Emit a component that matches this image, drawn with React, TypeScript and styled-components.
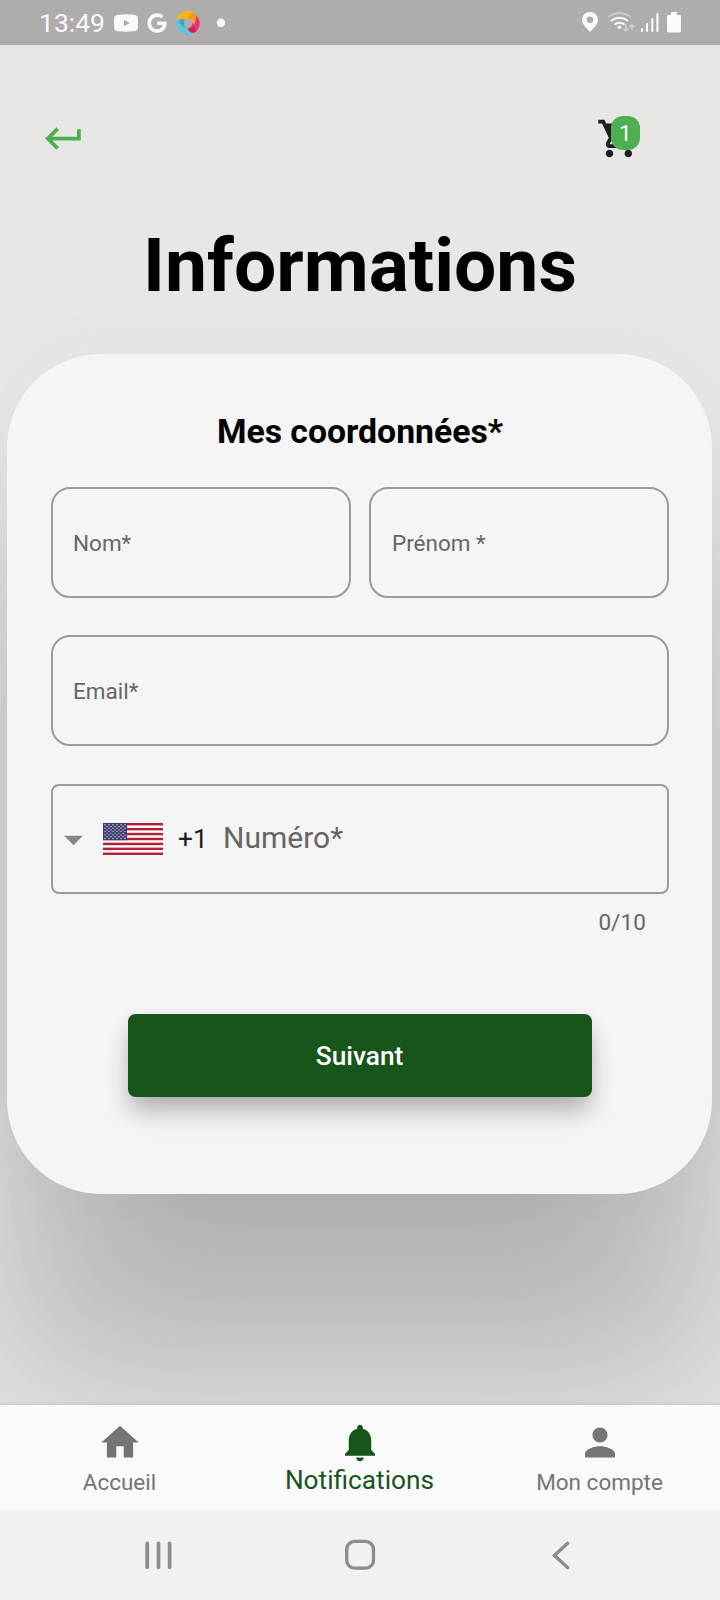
import React from "react";
import styled, { createGlobalStyle } from "styled-components";
import {
  MdArrowDropDown,
  MdHome,
  MdKeyboardReturn,
  MdNotifications,
  MdPerson,
  MdShoppingCart,
} from "react-icons/md";
import { FaGoogle } from "react-icons/fa";

const GlobalStyle = createGlobalStyle`
  *, *::before, *::after { box-sizing: border-box; }
  body { margin: 0; background: #e8e7e5; }
`;

const Screen = styled.div`
  width: 720px;
  height: 1600px;
  display: flex;
  flex-direction: column;
  overflow: hidden;
  background: #e8e7e5;
  font-family: Roboto, "Liberation Sans", sans-serif;
  color: #000;
`;

const StatusBar = styled.header`
  height: 45px;
  flex: none;
  display: flex;
  justify-content: space-between;
  padding: 0 38px 0 39px;
  background: #aeacac;
  color: #fafafa;
`;

const StatusGroup = styled.div`
  display: flex;
  align-items: center;
  svg { display: block; flex: none; }
`;

const Clock = styled.span`
  width: 75px;
  font-size: 26.5px;
  line-height: 45px;
  white-space: nowrap;
`;

const GoogleMark = styled(FaGoogle)`
  margin: 0 9px 0 9px;
`;

const Content = styled.main`
  flex: 1;
  min-height: 0;
  display: flex;
  flex-direction: column;
  overflow: hidden;
`;

const TopBar = styled.div`
  display: flex;
  justify-content: space-between;
  padding: 71px 79px 0 41px;
`;

const IconButton = styled.button<{ $color: string }>`
  position: relative;
  width: 45px;
  height: 45px;
  padding: 0;
  border: 0;
  background: none;
  color: ${(p) => p.$color};
  font-family: inherit;
  svg { display: block; transform: translateX(0.4px); }
`;

const Badge = styled.span`
  position: absolute;
  left: 15px;
  top: 0;
  width: 28.5px;
  height: 34px;
  border-radius: 12px;
  background: #4caf50;
  color: #fff;
  font-size: 22.5px;
  line-height: 34px;
  text-align: center;
`;

const Title = styled.h1`
  margin: 60px 0 0;
  font-size: 75px;
  line-height: 88px;
  font-weight: 700;
  text-align: center;
`;

const Card = styled.section`
  height: 840px;
  flex: none;
  margin: 45px 8px 0 7px;
  padding: 58px 43px 0 44px;
  display: flex;
  flex-direction: column;
  border-radius: 94px;
  background: #f5f5f5;
  box-shadow: 0 183px 140px -75px rgba(20, 14, 20, 0.14),
    0 183px 140px 50px rgba(20, 14, 20, 0.12),
    0 0 80px rgba(20, 14, 20, 0.03);
`;

const CardTitle = styled.h2`
  margin: 0 0 35px;
  font-size: 33.75px;
  line-height: 40px;
  font-weight: 700;
  text-align: center;
`;

const Fields = styled.div`
  display: grid;
  grid-template-columns: 1fr 1fr;
  column-gap: 18px;
  row-gap: 37px;
`;

const Field = styled.label<{ $wide?: boolean; $inset?: number }>`
  grid-column: ${(p) => (p.$wide ? "1 / -1" : "auto")};
  height: 111px;
  display: flex;
  align-items: center;
  padding-left: ${(p) => p.$inset ?? 20}px;
  border: 2px solid #9b9b9b;
  border-radius: 19px;
  color: #666;
  font-size: 22.5px;
  line-height: 26px;
`;

const PhoneField = styled(Field)`
  height: 110px;
  margin-top: 1px;
  border-radius: 8px;
  font-size: 30px;
  line-height: 36px;
`;

const Arrow = styled(MdArrowDropDown)`
  flex: none;
  margin: 1px 7px 0 -2px;
  color: #868686;
`;

const DialCode = styled.span`
  width: 45px;
  margin-left: 15px;
  color: #1f1f1f;
  font-size: 26.25px;
`;

const NumberLabel = styled.span`
  padding-bottom: 2px;
`;

const Counter = styled.div`
  margin: 14px 23px 0 0;
  color: #666;
  font-size: 22.5px;
  line-height: 28px;
  letter-spacing: 0.1px;
  text-align: right;
`;

const Submit = styled.button`
  align-self: center;
  width: 464px;
  height: 83px;
  margin: 78px 1px 0 0;
  border: 0;
  border-radius: 7.5px;
  background: #18551b;
  color: #fff;
  font-family: inherit;
  font-size: 26.25px;
  font-weight: 500;
  box-shadow: 0 18px 26px -3px rgba(0, 0, 0, 0.24),
    0 6px 20px rgba(0, 0, 0, 0.08);
`;

const TabBar = styled.nav`
  position: relative;
  height: 105px;
  flex: none;
  display: grid;
  grid-template-columns: repeat(3, 1fr);
  background: #fafafa;
  box-shadow: 0 0 4px rgba(0, 0, 0, 0.16);
`;

const Tab = styled.a<{ $active?: boolean }>`
  display: flex;
  flex-direction: column;
  align-items: center;
  padding: 15px 1px 0 0;
  color: ${(p) => (p.$active ? "#18551b" : "#757575")};
  font-size: ${(p) => (p.$active ? "26.25px" : "22.5px")};
  line-height: ${(p) => (p.$active ? "31px" : "35px")};
  svg { display: block; flex: none; transform: translateX(0.5px); }
`;

const SystemBar = styled.footer`
  position: relative;
  height: 90px;
  flex: none;
  display: flex;
  justify-content: space-between;
  align-items: center;
  padding: 0 146px 0 143px;
  background: #f1f1f1;
  svg { display: block; }
`;

const VideoIcon = () => (
  <svg width="24" height="18" viewBox="0 0 24 18">
    <path
      fillRule="evenodd"
      fill="#fafafa"
      d="M4 .7Q12-.2 20 .7 24 1 24 5V13Q24 17 20 17.3 12 18 4 17.3 0 17 0 13V5Q0 1 4 .7ZM10 5.8V12.2L16 9Z"
    />
  </svg>
);

const SwirlIcon = () => (
  <svg width="24" height="24" viewBox="0 0 24 24">
    <path fill="#fbb512" d="M.8 9.4C1.500 3.500 6 0 12 0 16 0 19 2.500 20 6.200L19 12.500C17.500 9 14.500 7.300 11 7.800L8 8.400C5 7.500 3 8 .8 9.400Z" />
    <path fill="#f99a0d" d="M11 7.600C12.500 4 15 2 17.500 1.700 19 3 20 4.500 20 6.200L19 12.500C17.500 9.300 14.800 7.400 11 7.600Z" />
    <path fill="#f2336f" d="M20.200 4.200C24.500 8.800 25 15 21 19.500 18 22.800 13.500 23 10.500 17.500 14 17.500 16 15.500 16.300 12.600L18.600 13C19.600 10 20.200 7.500 20.200 4.200Z" />
    <path fill="#d41f50" d="M10.500 17.500C14.200 18 17 16.500 18.500 14 18 17 18.800 19.500 20.500 20 17 23.500 12 22.500 10.500 17.500Z" />
    <path fill="#62c3df" d="M8 8C7.500 12 8.500 15.500 11.500 17 12.500 20 15.500 22.300 18 21.700 13 25 6 24.500 2.500 19-.5 14.500-.5 9 4 8.200 5.500 7.900 6.800 7.900 8 8Z" />
    <path fill="#42a6c8" d="M9 8C7.200 11 8 14.500 10 16.500 6 16 3.500 13.500 3 9.500 4.500 8.200 6.500 7.800 9 8Z" />
  </svg>
);

const DotIcon = () => (
  <svg width="41" height="24" viewBox="0 0 41 24">
    <circle cx="21" cy="11.800" r="4.200" fill="#fafafa" />
  </svg>
);

const SignalIcons = () => (
  <svg width="100" height="45" viewBox="582 0 100 45">
    <path
      fillRule="evenodd"
      fill="#fafafa"
      d="M590 12C585.500 12 582 15.500 582 20 582 24.500 587 28.500 590 32 593 28.500 598 24.500 598 20 598 15.500 594.500 12 590 12ZM590 16.500A3.300 3.300 0 1 1 590 23.100 3.300 3.300 0 1 1 590 16.500Z"
    />
    <g fill="none" stroke="#fafafa" strokeWidth="2.100">
      <path d="M608.500 17Q619.500 9 630.500 17" strokeOpacity=".42" />
      <path d="M611 21Q619.500 14.500 628 21" />
      <path d="M614.500 24.500Q619.500 21 624.500 24.500" />
    </g>
    <circle cx="619.500" cy="27.300" r="1.700" fill="#fafafa" />
    <path
      d="M626 24V31M623.500 28.500L626 31 628.500 28.500M632 30V24.500M629.500 27L632 24.500 634.500 27"
      fill="none"
      stroke="#fafafa"
      strokeOpacity=".45"
      strokeWidth="1.500"
    />
    <path
      d="M642 29V31M647 24.200V31M652.300 19V31M657.400 14.200V31"
      stroke="#fafafa"
      strokeWidth="2.200"
      strokeLinecap="round"
    />
    <path
      fill="#fafafa"
      d="M671.500 12H676.500Q677 12 677 12.500V15H680Q681 15 681 16V31Q681 32.500 679.500 32.500H668.500Q667 32.500 667 31V16Q667 15 668 15H671V12.500Q671 12 671.500 12Z"
    />
  </svg>
);

const stripeHeight = 32 / 13;

const UsFlag = () => (
  <svg width="60" height="32" viewBox="0 0 60 32">
    <rect width="60" height="32" fill="#fff" />
    {[0, 2, 4, 6, 8, 10, 12].map((n) => (
      <rect key={n} y={n * stripeHeight} width="60" height={stripeHeight} fill="#b22234" />
    ))}
    <rect width="24" height="17.200" fill="#3c3b6e" />
    {Array.from({ length: 9 }, (_, row) =>
      Array.from({ length: row % 2 ? 5 : 6 }, (_, col) => (
        <circle
          key={`${row}-${col}`}
          cx={2 + col * 4 + (row % 2 ? 2 : 0)}
          cy={1.7 + row * 1.73}
          r=".72"
          fill="#dcdce8"
        />
      ))
    )}
  </svg>
);

const RecentsIcon = () => (
  <svg width="31" height="30" viewBox="0 0 31 30">
    <path d="M4.200 3.300V27.200M15.500 3.300V27.200M26.600 3.300V27.200" stroke="#8c8c8c" strokeWidth="3.700" strokeLinecap="round" />
  </svg>
);

const HomeKeyIcon = () => (
  <svg width="32" height="32" viewBox="0 0 32 32">
    <rect x="1.700" y="2.400" width="26.800" height="26.800" rx="8" fill="none" stroke="#8c8c8c" strokeWidth="3.300" />
  </svg>
);

const BackKeyIcon = () => (
  <svg width="26" height="30" viewBox="0 0 26 30">
    <path d="M19.600 3.200L6.400 15.400 19.600 27.600" fill="none" stroke="#8c8c8c" strokeWidth="3.400" strokeLinecap="round" />
  </svg>
);

export default function App() {
  return (
    <>
      <GlobalStyle />
      <Screen>
        <StatusBar>
          <StatusGroup>
            <Clock>13:49</Clock>
            <VideoIcon />
            <GoogleMark size={20} />
            <SwirlIcon />
            <DotIcon />
          </StatusGroup>
          <StatusGroup>
            <SignalIcons />
          </StatusGroup>
        </StatusBar>
        <Content>
          <TopBar>
            <IconButton $color="#4caf50" aria-label="Retour">
              <MdKeyboardReturn size={45} />
            </IconButton>
            <IconButton $color="#1f1f1f" aria-label="Panier">
              <MdShoppingCart size={45} />
              <Badge>1</Badge>
            </IconButton>
          </TopBar>
          <Title>Informations</Title>
          <Card>
            <CardTitle>Mes coordonnées*</CardTitle>
            <Fields>
              <Field>Nom*</Field>
              <Field $inset={21}>Prénom *</Field>
              <Field $wide>Email*</Field>
              <PhoneField $wide $inset={0}>
                <Arrow size={45} />
                <UsFlag />
                <DialCode>+1</DialCode>
                <NumberLabel>Numéro*</NumberLabel>
              </PhoneField>
            </Fields>
            <Counter>0/10</Counter>
            <Submit>Suivant</Submit>
          </Card>
        </Content>
        <TabBar>
          <Tab>
            <MdHome size={45} />
            Accueil
          </Tab>
          <Tab $active>
            <MdNotifications size={45} />
            Notifications
          </Tab>
          <Tab>
            <MdPerson size={45} />
            Mon compte
          </Tab>
        </TabBar>
        <SystemBar>
          <RecentsIcon />
          <HomeKeyIcon />
          <BackKeyIcon />
        </SystemBar>
      </Screen>
    </>
  );
}
